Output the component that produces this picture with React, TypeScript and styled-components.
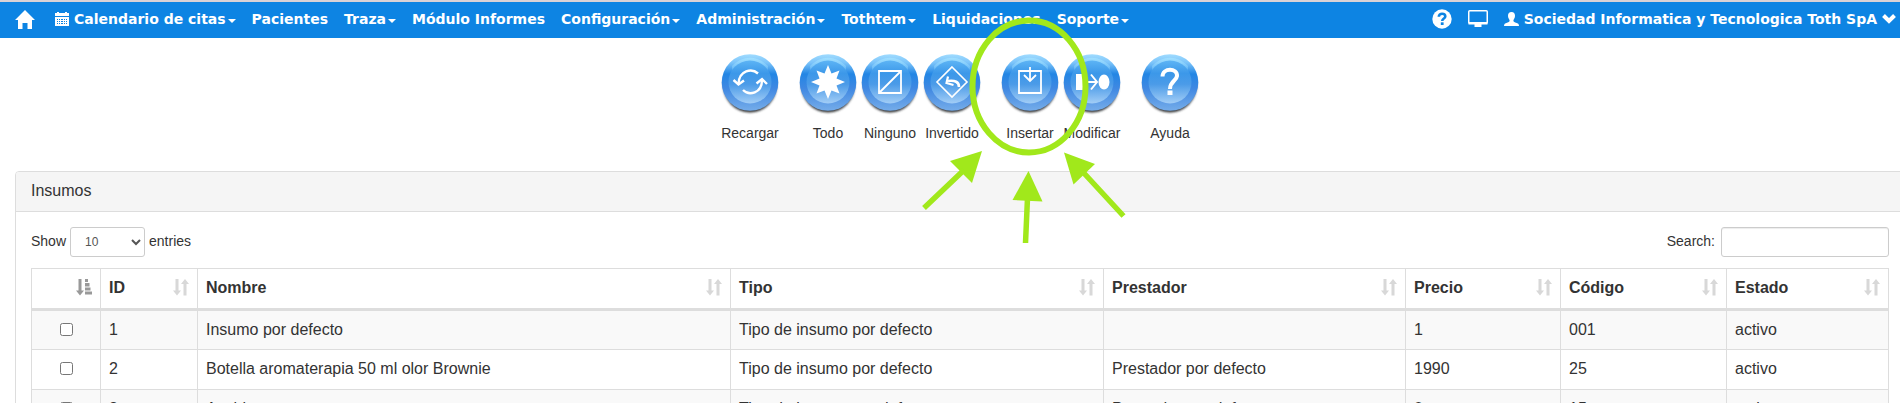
import React from "react";
import styled, { createGlobalStyle } from "styled-components";

const GlobalStyle = createGlobalStyle`
  *, *::before, *::after { box-sizing: border-box; }
  body {
    margin: 0;
    background: #fff;
    color: #333;
    font: 14px/20px "Liberation Sans", Arial, sans-serif;
  }
  #root { overflow: hidden; }
`;

const Navbar = styled.nav`
  display: flex;
  align-items: center;
  height: 38px;
  padding: 0 4px 2px 15px;
  border-top: 2px solid #d9d2d6;
  background: #0d84e3;
  color: #fff;
  font: bold 14px/20px Verdana, "DejaVu Sans", sans-serif;
  white-space: nowrap;
`;

const NavGroup = styled.div`
  display: flex;
  align-items: center;
  gap: 16px;
`;

const Spacer = styled.div`
  flex: 1;
`;

const NavLink = styled.a`
  display: flex;
  align-items: center;
  color: inherit;
  text-decoration: none;
`;

const HomeLink = styled(NavLink)`
  padding-right: 4px;
`;

const NavMenu = styled.button`
  display: flex;
  align-items: center;
  gap: 5px;
  padding: 0;
  border: 0;
  background: none;
  color: inherit;
  font: inherit;
  cursor: pointer;
`;

const Label = styled.span`
  display: flex;
  align-items: center;
  gap: 2px;
`;

const Caret = styled.i`
  margin-top: 3px;
  border: 4px solid transparent;
  border-top-color: currentColor;
  border-bottom: 0;
`;

const Content = styled.main`
  width: calc(100% + 20px);
  padding: 0 15px;
`;

const Toolbar = styled.div`
  position: relative;
  display: flex;
  justify-content: center;
  gap: 16px;
  padding: 15px 0 28px;
`;

const ToolGroup = styled.div`
  display: flex;
`;

const ToolButton = styled.button`
  display: flex;
  flex-direction: column;
  align-items: center;
  gap: 6px;
  width: 62px;
  padding: 0;
  border: 0;
  background: none;
  color: #333;
  font: 14px/20px "Liberation Sans", Arial, sans-serif;
  cursor: pointer;
`;

const Annotation = styled.svg`
  position: absolute;
  top: -28px;
  left: calc(50% - 60px);
  z-index: 2;
  pointer-events: none;
`;

const Panel = styled.section`
  border: 1px solid #ddd;
  border-radius: 4px;
`;

const PanelHeading = styled.h1`
  margin: 0;
  padding: 9px 15px 10px;
  border-bottom: 1px solid #ddd;
  border-radius: 3px 3px 0 0;
  background: #f5f5f5;
  font-size: 16px;
  font-weight: normal;
  line-height: 20px;
`;

const PanelBody = styled.div`
  padding: 15px;
`;

const Controls = styled.div`
  display: flex;
  justify-content: space-between;
  margin-bottom: 11px;
`;

const Field = styled.label<{ $gap: number }>`
  display: flex;
  align-items: flex-start;
  gap: ${(p) => p.$gap}px;
  line-height: 28px;
`;

const LengthSelect = styled.select`
  width: 75px;
  height: 30px;
  padding: 5px 10px;
  border: 1px solid #ccc;
  border-radius: 3px;
  background: #fff;
  color: #555;
  font: 12px/18px "Liberation Sans", Arial, sans-serif;
`;

const SearchInput = styled.input`
  width: 168px;
  height: 30px;
  padding: 5px 10px;
  border: 1px solid #ccc;
  border-radius: 3px;
  background: #fff;
  box-shadow: inset 0 1px 1px rgba(0, 0, 0, 0.075);
  font: 12px/18px "Liberation Sans", Arial, sans-serif;
`;

const Table = styled.table`
  width: 100%;
  table-layout: fixed;
  border-collapse: collapse;
  font-size: 16px;
  line-height: 23px;
`;

const Col = styled.col<{ $width?: number }>`
  width: ${(p) => (p.$width ? `${p.$width}px` : "auto")};
`;

const HeadCell = styled.th`
  height: 41px;
  padding: 0 8px 3px;
  border: 1px solid #ddd;
  border-bottom-width: 3px;
  text-align: left;
`;

const HeadInner = styled.div`
  display: flex;
  align-items: center;
  justify-content: space-between;
`;

const Row = styled.tr`
  &:nth-child(odd) { background: #f9f9f9; }
`;

const Cell = styled.td<{ $center?: boolean }>`
  height: 40px;
  padding: 0 8px 2px;
  border: 1px solid #ddd;
  text-align: ${(p) => (p.$center ? "center" : "left")};
`;

const Check = styled.input`
  display: block;
  width: 13px;
  height: 13px;
  margin: 0 auto;
`;

const HomeIcon = () => (
  <svg width="20" height="19" viewBox="0 0 20 19" fill="currentColor">
    <path d="M10 0 20 10h-3v9h-4.500v-6h-5v6H3v-9H0L6 4z" />
  </svg>
);

const CalendarIcon = () => (
  <svg width="14" height="14" viewBox="0 0 14 14" fill="currentColor">
    <path d="M0 1h2V0h2v1h6V0h2v1h2v3H0z" />
    <path fillRule="evenodd" d="M0 5h14v9H0zM2 7v1h1V7zM4 7v1h1V7zM6 7v1h2V7zM9 7v1h1V7zM11 7v1h1V7zM2 9v1h1V9zM4 9v1h1V9zM6 9v1h2V9zM9 9v1h1V9zM11 9v1h1V9zM2 11v1h1v-1zM4 11v1h1v-1zM6 11v1h2v-1zM9 11v1h1v-1zM11 11v1h1v-1z" />
  </svg>
);

const HelpIcon = () => (
  <svg width="20" height="20" viewBox="0 0 20 20">
    <circle cx="10" cy="10" r="9.700" fill="#fff" />
    <path d="M6.800 7.800C6.800 3.600 13.300 3.900 13.300 7.500 13.300 9.600 10.200 9.500 10.200 12" fill="none" stroke="#0d84e3" strokeWidth="2.600" />
    <path d="M8.800 13.300h2.800v2.700H8.800z" fill="#0d84e3" />
  </svg>
);

const MonitorIcon = () => (
  <svg width="20" height="18" viewBox="0 0 20 18">
    <rect x="0.750" y="0.750" width="18.500" height="12.500" rx="1" fill="none" stroke="#fff" strokeWidth="1.500" />
    <path d="M0.500 12h19v2.500h-6V17h-7v-2.500h-6z" fill="#fff" />
  </svg>
);

const UserIcon = () => (
  <svg width="15" height="14" viewBox="0 0 15 14" fill="currentColor">
    <path d="M7.500 0C9.800 0 11 1.600 11 3.800 11 6 10 7 9.400 8.200 9.400 9.600 10 10 12 10.800 14 11.500 15 12 15 14H0C0 12 1 11.500 3 10.800 5 10 5.600 9.600 5.600 8.200 5 7 4 6 4 3.800 4 1.600 5.200 0 7.500 0z" />
  </svg>
);

const ChevronIcon = () => (
  <svg width="14" height="10" viewBox="0 0 14 10">
    <path d="M1.500 1.500 7 7l5.500-5.500" fill="none" stroke="#fff" strokeWidth="4" />
  </svg>
);

const SortIcon = () => (
  <svg width="16" height="18" viewBox="0 0 16 18" fill="#d8d8d8">
    <path d="M2.500 1h3v11.500H8L4 17.500 0 12.500h2.500zM10.500 17.500V6H8l4-5 4 5h-2.500v11.500z" />
  </svg>
);

const SortedIcon = () => (
  <svg width="16" height="18" viewBox="0 0 16 18" fill="#999">
    <path d="M2.500 1h3v11.500H8L4 17.500 0 12.500h2.500zM9 1h3v3H9zM9 5h4.500v3.500H9zM9 9.500h5.500v3H9zM9 13.500h7v3H9z" />
  </svg>
);

const glyphs = {
  reload: (
    <g fill="none" stroke="#fff" strokeWidth="2.400">
      <path d="M39 20.500C33 15 20 17 19.500 31M24 37c6 6 19 3.500 19-10" />
      <path d="M14.500 27 19.500 31.500 25 27.500M37.500 30.500 43 26l5 5" />
    </g>
  ),
  star: (
    <path fill="#fff" d="M31 12l3.500 8.500L42.500 17.500 39.500 25.500 48 29 39.500 32.500 42.500 40.500 34.500 37.500 31 46 27.500 37.500 19.500 40.500 22.500 32.500 14 29 22.500 25.500 19.500 17.500 27.500 20.500z" />
  ),
  none: <path fill="none" stroke="#fff" strokeWidth="1.800" d="M20 18h22v22H20zM20 40 42 18" />,
  invert: (
    <g fill="none" stroke="#fff">
      <path strokeWidth="1.600" d="M31 14 46 29 31 44 16 29z" />
      <path strokeWidth="2.600" d="M38 34c0-5-4-7-11-6" />
      <path strokeWidth="2.200" d="M27 23.500 25.500 30l7 2" />
    </g>
  ),
  insert: (
    <g fill="none" stroke="#fff" strokeWidth="1.800">
      <path d="M20 18h22v22H20z" />
      <path d="M31 14v14M25 22l6 6 6-6" />
    </g>
  ),
  modify: (
    <g>
      <path fill="#fff" d="M15 21h9v16h-9z" />
      <ellipse cx="43" cy="29" rx="5.500" ry="7.500" fill="#fff" />
      <path d="M23 29h13M30 21.500l6 7.500-6 7.500" fill="none" stroke="#fff" strokeWidth="2" />
    </g>
  ),
  help: (
    <g>
      <path d="M23.500 23.500C23.500 14.500 38.500 14.500 38 23 37.500 28 31 28 31 36" fill="none" stroke="#fff" strokeWidth="4" />
      <path d="M28.500 37.500h5V42h-5z" fill="#fff" />
    </g>
  ),
};

type Glyph = keyof typeof glyphs;

const BallIcon = ({ glyph }: { glyph: Glyph }) => (
  <svg width="62" height="64" viewBox="0 0 62 64">
    <ellipse cx="31" cy="32" rx="27" ry="27.500" fill="url(#shade)" filter="url(#soft)" />
    <circle cx="31" cy="29.500" r="28.300" fill="url(#rim)" />
    <path d="M13 13C24 2 38 2 49 13L48 28H14z" fill="url(#gloss)" />
    <circle cx="31" cy="29" r="21.500" fill="url(#core)" />
    {glyphs[glyph]}
  </svg>
);

const Defs = () => (
  <svg width="0" height="0" aria-hidden="true" display="block">
    <defs>
      <linearGradient id="shade" x1="0" y1="0" x2="0" y2="1">
        <stop offset="0" stopColor="#6ba0dc" />
        <stop offset="1" stopColor="#333" />
      </linearGradient>
      <linearGradient id="rim" x1="0" y1="0" x2="0" y2="1">
        <stop offset="0" stopColor="#a0dcff" />
        <stop offset="0.150" stopColor="#7cc4fa" />
        <stop offset="0.350" stopColor="#2386e4" />
        <stop offset="0.600" stopColor="#3f88e2" />
        <stop offset="1" stopColor="#75ace9" />
      </linearGradient>
      <linearGradient id="gloss" x1="0" y1="0" x2="0" y2="1">
        <stop offset="0" stopColor="#a0dfff" />
        <stop offset="1" stopColor="#5eb4f5" stopOpacity="0" />
      </linearGradient>
      <linearGradient id="core" x1="0" y1="0" x2="0" y2="1">
        <stop offset="0" stopColor="#5db4f5" />
        <stop offset="0.300" stopColor="#3c98e9" />
        <stop offset="0.550" stopColor="#4b9be8" />
        <stop offset="1" stopColor="#a2cdf6" />
      </linearGradient>
      <filter id="soft" x="-10%" y="-10%" width="120%" height="120%">
        <feGaussianBlur stdDeviation="1.200" />
      </filter>
    </defs>
  </svg>
);

type NavItem = { text: string; menu?: boolean; calendar?: boolean };

const navItems: NavItem[] = [
  { text: "Calendario de citas", menu: true, calendar: true },
  { text: "Pacientes" },
  { text: "Traza", menu: true },
  { text: "Módulo Informes" },
  { text: "Configuración", menu: true },
  { text: "Administración", menu: true },
  { text: "Tothtem", menu: true },
  { text: "Liquidaciones" },
  { text: "Soporte", menu: true },
];

const tools: { text: string; glyph: Glyph }[][] = [
  [{ text: "Recargar", glyph: "reload" }],
  [
    { text: "Todo", glyph: "star" },
    { text: "Ninguno", glyph: "none" },
    { text: "Invertido", glyph: "invert" },
  ],
  [
    { text: "Insertar", glyph: "insert" },
    { text: "Modificar", glyph: "modify" },
  ],
  [{ text: "Ayuda", glyph: "help" }],
];

const columns: { title: string; width?: number }[] = [
  { title: "", width: 69 },
  { title: "ID", width: 97 },
  { title: "Nombre" },
  { title: "Tipo", width: 373 },
  { title: "Prestador", width: 302 },
  { title: "Precio", width: 155 },
  { title: "Código", width: 166 },
  { title: "Estado", width: 162 },
];

const rows = [
  ["1", "Insumo por defecto", "Tipo de insumo por defecto", "", "1", "001", "activo"],
  ["2", "Botella aromaterapia 50 ml olor Brownie", "Tipo de insumo por defecto", "Prestador por defecto", "1990", "25", "activo"],
  ["3", "Aspirina", "Tipo de insumo por defecto", "Prestador por defecto", "0", "15", "activo"],
];

const App = () => (
  <>
    <GlobalStyle />
    <Defs />
    <Navbar>
      <NavGroup>
        <HomeLink href="#" aria-label="Inicio"><HomeIcon /></HomeLink>
        {navItems.map(({ text, menu, calendar }) =>
          menu ? (
            <NavMenu key={text} type="button">
              {calendar && <CalendarIcon />}
              <Label>{text}<Caret /></Label>
            </NavMenu>
          ) : (
            <NavLink key={text} href="#">{text}</NavLink>
          )
        )}
      </NavGroup>
      <Spacer />
      <NavGroup>
        <NavLink href="#" aria-label="Ayuda"><HelpIcon /></NavLink>
        <NavLink href="#" aria-label="Pantalla"><MonitorIcon /></NavLink>
        <NavMenu type="button">
          <UserIcon />
          Sociedad Informatica y Tecnologica Toth SpA
          <ChevronIcon />
        </NavMenu>
      </NavGroup>
    </Navbar>
    <Content>
      <Toolbar>
        {tools.map((group) => (
          <ToolGroup key={group[0].text}>
            {group.map(({ text, glyph }) => (
              <ToolButton key={text} type="button">
                <BallIcon glyph={glyph} />
                {text}
              </ToolButton>
            ))}
          </ToolGroup>
        ))}
        <Annotation width="240" height="240" viewBox="0 0 240 240" aria-hidden="true">
          <ellipse cx="129" cy="76.500" rx="56.500" ry="66" fill="none" stroke="#a1e81b" strokeWidth="6" />
          <g fill="#a1e81b" stroke="none">
            <path d="M82 141 72 173 50 151z" />
            <path d="M128.500 161 142.500 191.500 112.500 190z" />
            <path d="M164 142.500 195 154 173.500 174.500z" />
          </g>
          <path d="M24 198 64 160M125.500 233 127.500 188M223.500 206 182 161" stroke="#a1e81b" strokeWidth="5.500" />
        </Annotation>
      </Toolbar>
      <Panel>
        <PanelHeading>Insumos</PanelHeading>
        <PanelBody>
          <Controls>
            <Field $gap={4}>
              Show
              <LengthSelect defaultValue="10">
                <option>10</option>
                <option>25</option>
                <option>50</option>
                <option>100</option>
              </LengthSelect>
              entries
            </Field>
            <Field $gap={6}>
              Search:
              <SearchInput type="search" />
            </Field>
          </Controls>
          <Table>
            <colgroup>
              {columns.map((c) => <Col key={c.title} $width={c.width} />)}
            </colgroup>
            <thead>
              <tr>
                {columns.map((c) => (
                  <HeadCell key={c.title}>
                    <HeadInner>
                      <span>{c.title}</span>
                      {c.title ? <SortIcon /> : <SortedIcon />}
                    </HeadInner>
                  </HeadCell>
                ))}
              </tr>
            </thead>
            <tbody>
              {rows.map((row) => (
                <Row key={row[0]}>
                  <Cell $center><Check type="checkbox" aria-label={`Seleccionar ${row[1]}`} /></Cell>
                  {row.map((value, i) => <Cell key={columns[i + 1].title}>{value}</Cell>)}
                </Row>
              ))}
            </tbody>
          </Table>
        </PanelBody>
      </Panel>
    </Content>
  </>
);

export default App;
